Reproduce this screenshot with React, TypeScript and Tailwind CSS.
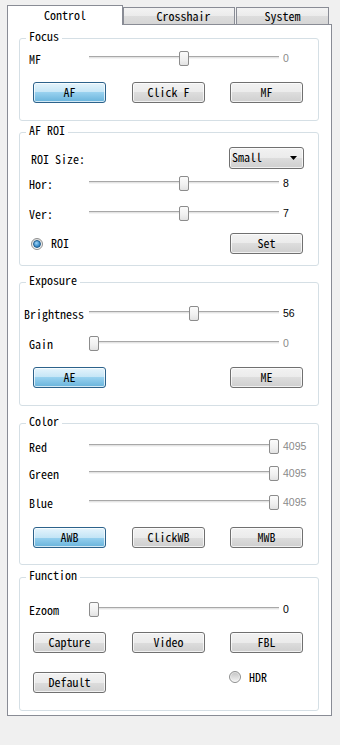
import React from "react";

const btnNormal =
  "border-[#707070] bg-[linear-gradient(to_bottom,#f2f2f2_0%,#ebebeb_50%,#dddddd_50%,#cfcfcf_100%)]";
const btnActive =
  "border-[#2c628b] bg-[linear-gradient(to_bottom,#e5f4fc_0%,#c4e5f6_50%,#98d1ef_50%,#68b3db_100%)]";

function Btn({ children, active, className = "" }: { children: React.ReactNode; active?: boolean; className?: string }) {
  return (
    <div
      className={
        "w-[73px] h-[21px] rounded-[3px] border flex items-center justify-center shadow-[inset_0_0_0_1px_rgba(255,255,255,0.7)] " +
        (active ? btnActive : btnNormal) +
        " " +
        className
      }
    >
      <span className="leading-[12px] mt-[-1px]">{children}</span>
    </div>
  );
}

function Group({ title, className = "", children }: { title: string; className?: string; children?: React.ReactNode }) {
  return (
    <div className={"relative ml-[11px] w-[300px] border border-[#d5dfe5] rounded-[3px] flex flex-col " + className}>
      <span className="absolute left-[6px] top-[-9px] bg-white px-[3px] leading-[12px]">{title}</span>
      {children}
    </div>
  );
}

function Slider({ value, max }: { value: number; max: number }) {
  const left = Math.round((value / max) * 180);
  return (
    <div className="relative w-[190px] h-[15px] shrink-0">
      <div className="absolute left-0 right-0 top-[5px] h-[3px] border-t border-[#a8a8a8] bg-[#e4e4e4] border-b border-b-[#f4f4f4]" />
      <div
        className="absolute top-0 h-[15px] w-[10px] rounded-[2px] border border-[#8c8c8c] bg-[linear-gradient(to_bottom,#fbfbfb_0%,#f0f0f0_60%,#e2e2e2_100%)]"
        style={{ left }}
      />
    </div>
  );
}

function SliderRow({
  label,
  value,
  max,
  text,
  gray,
  labelClass = "pl-[9px]",
  className = "",
}: {
  label: string;
  value: number;
  max: number;
  text: string;
  gray?: boolean;
  labelClass?: string;
  className?: string;
}) {
  return (
    <div className={"flex items-center h-[15px] " + className}>
      <div className={"w-[69px] shrink-0 leading-[12px] " + labelClass}>{label}</div>
      <Slider value={value} max={max} />
      <span
        className={
          "ml-[4px] font-['Liberation_Sans',Arial,sans-serif] text-[10.5px] leading-[12px] mt-[-1px] " +
          (gray ? "text-[#8a8a8a]" : "text-black")
        }
      >
        {text}
      </span>
    </div>
  );
}

function Radio({ checked }: { checked?: boolean }) {
  return (
    <div className="w-[12px] h-[12px] rounded-full border border-[#8e8f8f] bg-[linear-gradient(to_bottom,#e0e0e0,#fcfcfc)] flex items-center justify-center shrink-0">
      {checked ? (
        <div className="w-[8px] h-[8px] rounded-full border border-[#1d5a8a] bg-[radial-gradient(circle_at_40%_35%,#9fd3f5_0%,#3f92cf_55%,#1f66a3_100%)]" />
      ) : (
        <div className="w-[8px] h-[8px] rounded-full bg-[linear-gradient(to_bottom,#c8c8c8,#f0f0f0)]" />
      )}
    </div>
  );
}

export default function App() {
  return (
    <div className="w-[340px] h-[745px] bg-[#f0f0f0] pt-[5px] pl-[7px] font-['Noto_Sans_Mono_CJK_SC','Liberation_Mono',monospace] text-[12px] text-black">
      {/* tabs */}
      <div className="flex items-end h-[19px]">
        <div className="relative z-10 -mb-px w-[116px] h-[20px] bg-white border-l border-t border-r border-[#898c95] flex items-center justify-center">
          <span className="leading-[12px] mt-[-1px]">Control</span>
        </div>
        <div className="w-[112px] h-[17px] border-l border-t border-r border-[#898c95] bg-[linear-gradient(to_bottom,#f3f3f3_0%,#ebebeb_50%,#dddddd_50%,#d6d6d6_100%)] flex items-center justify-center pl-[9px]">
          <span className="leading-[12px]">Crosshair</span>
        </div>
        <div className="ml-[1px] w-[93px] h-[17px] border-l border-t border-r border-[#898c95] bg-[linear-gradient(to_bottom,#f3f3f3_0%,#ebebeb_50%,#dddddd_50%,#d6d6d6_100%)] flex items-center justify-center">
          <span className="leading-[12px]">System</span>
        </div>
      </div>

      {/* pane */}
      <div className="w-[325px] h-[692px] border border-[#898c95] bg-white flex flex-col pt-[13px]">
        <Group title="Focus" className="h-[83px]">
          <SliderRow label="MF" value={50} max={100} text="0" gray className="mt-[12px]" />
          <div className="flex mt-[16px]">
            <Btn active className="ml-[13px]">AF</Btn>
            <Btn className="ml-[26px]">Click F</Btn>
            <Btn className="ml-[25px]">MF</Btn>
          </div>
        </Group>

        <Group title="AF ROI" className="mt-[11px] h-[134px]">
          <div className="flex items-center h-[22px] mt-[14px]">
            <div className="pl-[11px] leading-[12px] pt-[1px]">ROI Size:</div>
            <div
              className={
                "ml-auto mr-[14px] w-[75px] h-[22px] rounded-[3px] border flex items-center pl-[2px] pr-[6px] shadow-[inset_0_0_0_1px_rgba(255,255,255,0.7)] " +
                btnNormal
              }
            >
              <span className="leading-[12px] mt-[-2px]">Small</span>
              <svg className="ml-auto" width="7" height="4" viewBox="0 0 7 4">
                <path d="M0 0H7L3.5 4Z" fill="#000" />
              </svg>
            </div>
          </div>
          <SliderRow label="Hor:" value={50} max={100} text="8" className="mt-[7px]" />
          <SliderRow label="Ver:" value={50} max={100} text="7" className="mt-[15px]" />
          <div className="flex items-center h-[21px] mt-[12px] pr-[15px]">
            <div className="ml-[11px]">
              <Radio checked />
            </div>
            <span className="ml-[8px] leading-[12px] mt-[-1px]">ROI</span>
            <Btn className="ml-auto">Set</Btn>
          </div>
        </Group>

        <Group title="Exposure" className="mt-[16px] h-[124px]">
          <SliderRow label="Brightness" value={100} max={180} text="56" labelClass="pl-[4px]" className="mt-[23px]" />
          <SliderRow label="Gain" value={0} max={100} text="0" gray className="mt-[15px]" />
          <div className="flex mt-[16px] pr-[15px]">
            <Btn active className="ml-[13px]">AE</Btn>
            <Btn className="ml-auto">ME</Btn>
          </div>
        </Group>

        <Group title="Color" className="mt-[17px] h-[142px]">
          <SliderRow label="Red" value={4095} max={4095} text="4095" gray className="mt-[15px]" />
          <SliderRow label="Green" value={4095} max={4095} text="4095" gray className="mt-[12px]" />
          <SliderRow label="Blue" value={4095} max={4095} text="4095" gray className="mt-[14px]" />
          <div className="flex mt-[17px]">
            <Btn active className="ml-[13px]">AWB</Btn>
            <Btn className="ml-[26px]">ClickWB</Btn>
            <Btn className="ml-[25px]">MWB</Btn>
          </div>
        </Group>

        <Group title="Function" className="mt-[12px] h-[134px]">
          <SliderRow label="Ezoom" value={0} max={100} text="0" className="mt-[24px]" />
          <div className="flex mt-[15px]">
            <Btn className="ml-[13px]">Capture</Btn>
            <Btn className="ml-[26px]">Video</Btn>
            <Btn className="ml-[25px]">FBL</Btn>
          </div>
          <div className="flex items-start mt-[19px]">
            <Btn className="ml-[13px]">Default</Btn>
            <div className="ml-[123px] mt-[-1px] flex items-center h-[12px]">
              <Radio />
              <span className="ml-[8px] leading-[12px] mt-[-1px]">HDR</span>
            </div>
          </div>
        </Group>
      </div>
    </div>
  );
}
